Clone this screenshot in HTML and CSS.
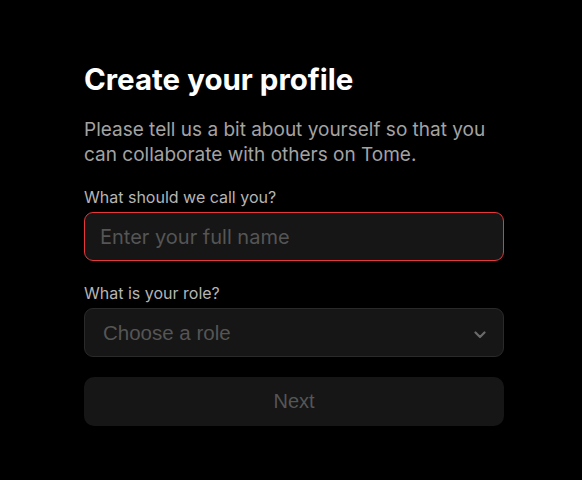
FILE: index.html
```html
<!DOCTYPE html>
<html lang="en">
<head>
<meta charset="utf-8">
<title>Create your profile</title>
<link rel="stylesheet" href="styles.css">
</head>
<body>
<main class="page">
  <form class="card">
    <h1 class="title">Create your profile</h1>
    <p class="desc">Please tell us a bit about yourself so that you can collaborate with others on Tome.</p>
    <div class="fields">
      <label class="field">
        <span class="label">What should we call you?</span>
        <input class="input input-error" type="text" placeholder="Enter your full name">
      </label>
      <label class="field">
        <span class="label">What is your role?</span>
        <span class="select">
          <span class="select-text">Choose a role</span>
          <svg class="chevron" width="12" height="8" viewBox="0 0 12 8" fill="none" aria-hidden="true">
            <path d="M1.5 1.5 L6 6 L10.5 1.5" stroke="#6a6a6a" stroke-width="2.2" stroke-linecap="round" stroke-linejoin="round"/>
          </svg>
        </span>
      </label>
    </div>
    <button class="next" type="button">Next</button>
  </form>
</main>
</body>
</html>
```

FILE: styles.css
```css
* { box-sizing: border-box; }
html, body {
  margin: 0;
  padding: 0;
  background: #000;
  height: 100%;
}
body {
  font-family: Inter, "Noto Sans", sans-serif;
  color: #fff;
}
.page {
  padding: 62px 78px 0 84px;
}
.card {
  width: 420px;
  display: flex;
  flex-direction: column;
  margin: 0;
}
.title {
  margin: 0;
  font-size: 29.5px;
  line-height: 34px;
  font-weight: 700;
  color: #fff;
}
.desc {
  margin: 21px 0 0;
  font-size: 19px;
  line-height: 25px;
  color: #a3a3a3;
}
.fields {
  margin-top: 20px;
  display: flex;
  flex-direction: column;
  gap: 22px;
}
.field {
  display: flex;
  flex-direction: column;
  gap: 5px;
}
.label {
  font-size: 16px;
  line-height: 20px;
  color: #b5b5b5;
}
.input {
  height: 49px;
  width: 100%;
  background: #161616;
  border: 1px solid #2a2a2a;
  border-radius: 9px;
  padding: 0 15px;
  font-family: Inter, "Noto Sans", sans-serif;
  font-size: 20px;
  color: #ddd;
  outline: none;
}
.input::placeholder { color: #555; }
.input-error { border-color: #e5383b; }
.select {
  height: 49px;
  background: #161616;
  border: 1px solid #2a2a2a;
  border-radius: 9px;
  padding: 0 17px 0 18px;
  display: flex;
  align-items: center;
  justify-content: space-between;
}
.select-text {
  font-family: "Liberation Sans", Arial, sans-serif;
  font-size: 20.5px;
  color: #555;
}
.chevron { display: block; margin-top: 4px; }
.next {
  margin-top: 20px;
  height: 49px;
  width: 100%;
  background: #161616;
  border: none;
  border-radius: 10px;
  font-family: "Liberation Sans", Arial, sans-serif;
  font-size: 20px;
  color: #555;
  padding: 0;
}
```
